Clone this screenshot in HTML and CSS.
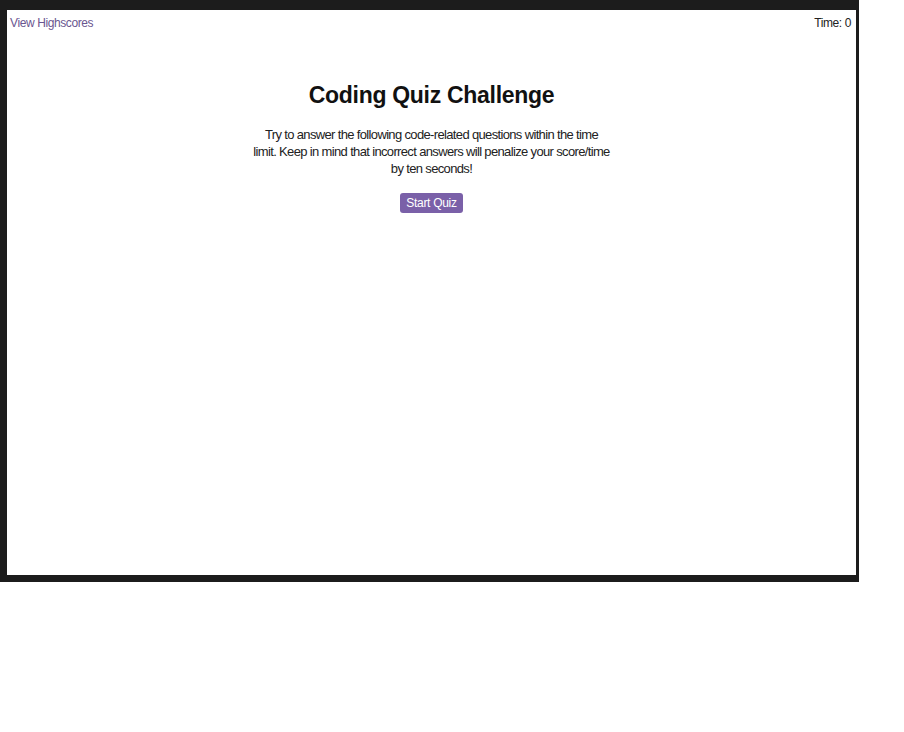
FILE: index.html
```html
<!DOCTYPE html>
<html lang="en">
<head>
<meta charset="utf-8">
<title>Coding Quiz Challenge</title>
<link rel="stylesheet" href="styles.css">
</head>
<body>
<div class="frame">
  <header class="topbar">
    <a class="highscores" href="#">View Highscores</a>
    <span class="timer">Time: 0</span>
  </header>
  <main class="intro">
    <h1 class="title">Coding Quiz Challenge</h1>
    <p class="desc">Try to answer the following code-related questions within the time<br>limit. Keep in mind that incorrect answers will penalize your score/time<br>by ten seconds!</p>
    <button class="start">Start Quiz</button>
  </main>
</div>
</body>
</html>
```
FILE: styles.css
```css
html, body {
  margin: 0;
  padding: 0;
  background: #ffffff;
}
body {
  width: 904px;
  height: 732px;
  font-family: "Liberation Sans", Arial, sans-serif;
}
.frame {
  box-sizing: border-box;
  width: 859px;
  height: 582px;
  border-style: solid;
  border-color: #1c1c1c;
  border-width: 10px 3px 7px 7px;
  background: #ffffff;
  display: flex;
  flex-direction: column;
}
.topbar {
  display: flex;
  justify-content: space-between;
  align-items: flex-start;
  padding: 6px 5px 0 3px;
  font-size: 12px;
  letter-spacing: -0.4px;
}
.highscores {
  color: #6a5690;
  text-decoration: none;
}
.timer {
  color: #222222;
}
.intro {
  display: flex;
  flex-direction: column;
  align-items: center;
  padding-top: 52px;
}
.title {
  margin: 0;
  font-size: 23px;
  font-weight: bold;
  color: #111111;
  letter-spacing: -0.3px;
}
.desc {
  margin: 17px 0 0;
  text-align: center;
  font-size: 13px;
  line-height: 17px;
  letter-spacing: -0.65px;
  color: #222222;
  white-space: nowrap;
}
.start {
  margin-top: 16px;
  padding: 2px 6px;
  border: none;
  border-radius: 3px;
  background: #7a60a8;
  color: #ffffff;
  font-family: "Liberation Sans", Arial, sans-serif;
  font-size: 12px;
  letter-spacing: -0.3px;
  line-height: 16px;
}
```
